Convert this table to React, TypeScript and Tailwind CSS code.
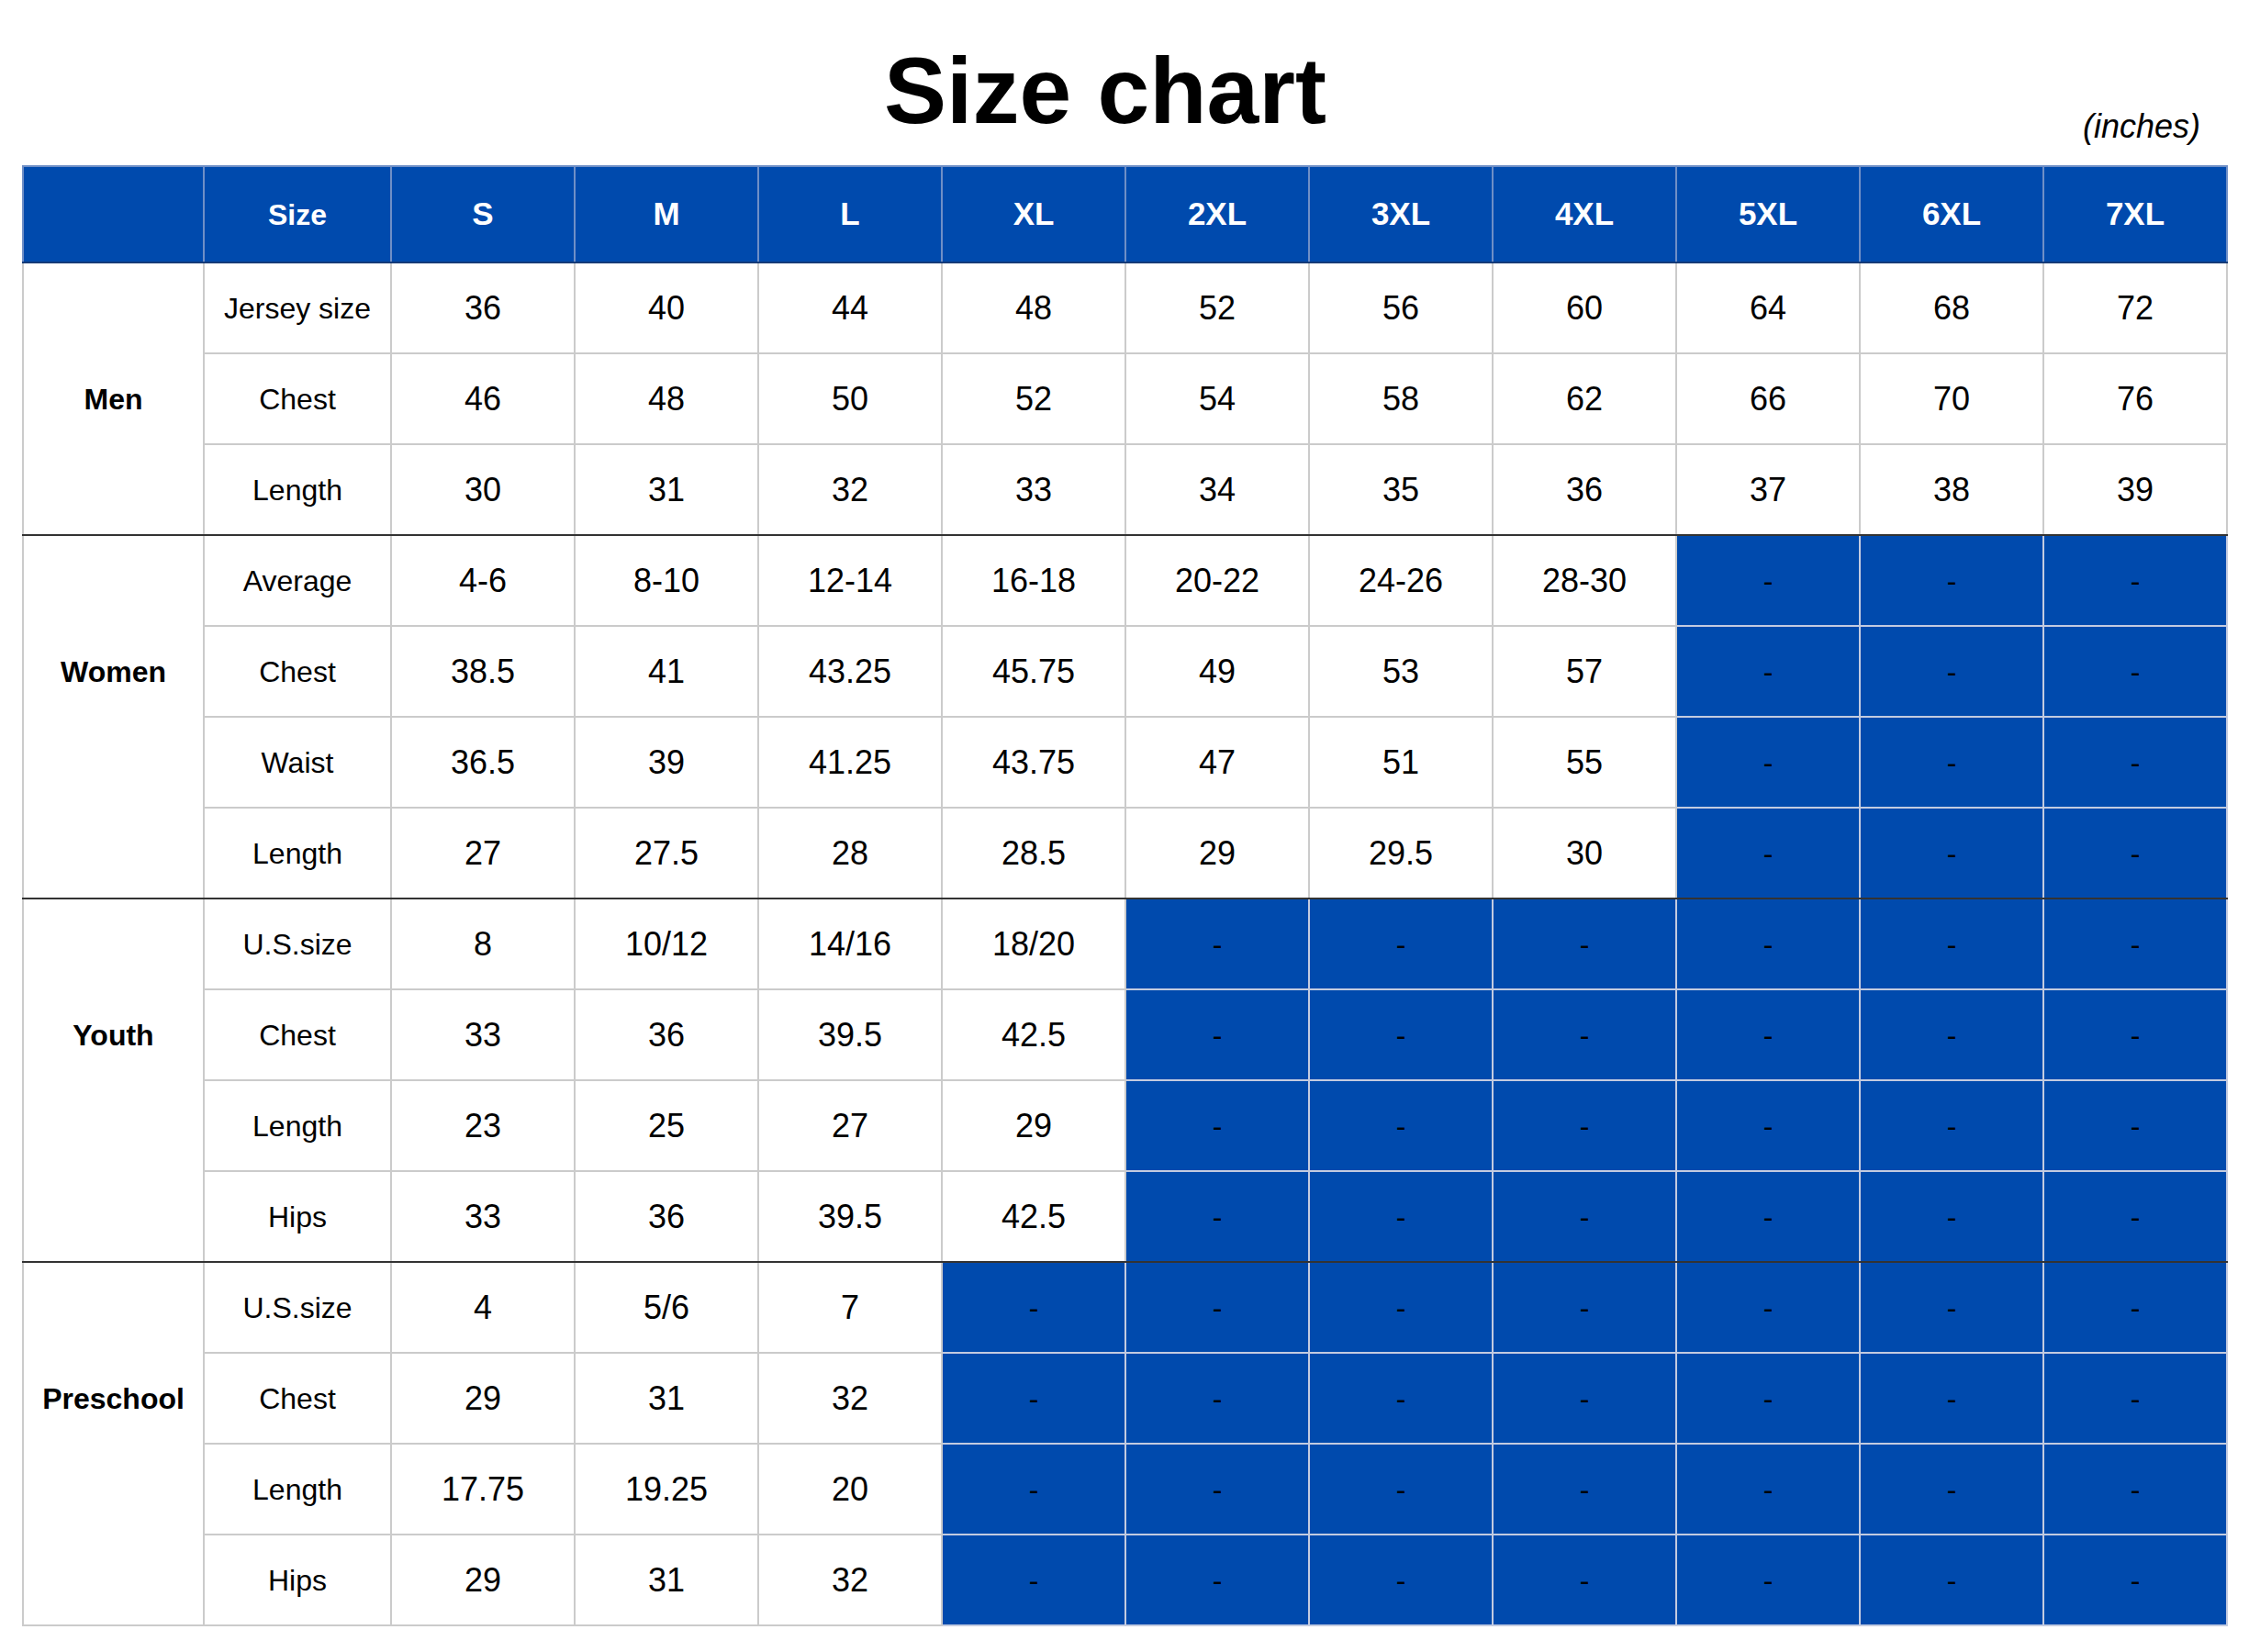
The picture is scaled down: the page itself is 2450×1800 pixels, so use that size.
const sizes = ['S', 'M', 'L', 'XL', '2XL', '3XL', '4XL', '5XL', '6XL', '7XL'];

type Group = { name: string; rows: { label: string; values: string[] }[] };

const groups: Group[] = [
  {
    name: 'Men',
    rows: [
      { label: 'Jersey size', values: ['36', '40', '44', '48', '52', '56', '60', '64', '68', '72'] },
      { label: 'Chest', values: ['46', '48', '50', '52', '54', '58', '62', '66', '70', '76'] },
      { label: 'Length', values: ['30', '31', '32', '33', '34', '35', '36', '37', '38', '39'] },
    ],
  },
  {
    name: 'Women',
    rows: [
      { label: 'Average', values: ['4-6', '8-10', '12-14', '16-18', '20-22', '24-26', '28-30'] },
      { label: 'Chest', values: ['38.5', '41', '43.25', '45.75', '49', '53', '57'] },
      { label: 'Waist', values: ['36.5', '39', '41.25', '43.75', '47', '51', '55'] },
      { label: 'Length', values: ['27', '27.5', '28', '28.5', '29', '29.5', '30'] },
    ],
  },
  {
    name: 'Youth',
    rows: [
      { label: 'U.S.size', values: ['8', '10/12', '14/16', '18/20'] },
      { label: 'Chest', values: ['33', '36', '39.5', '42.5'] },
      { label: 'Length', values: ['23', '25', '27', '29'] },
      { label: 'Hips', values: ['33', '36', '39.5', '42.5'] },
    ],
  },
  {
    name: 'Preschool',
    rows: [
      { label: 'U.S.size', values: ['4', '5/6', '7'] },
      { label: 'Chest', values: ['29', '31', '32'] },
      { label: 'Length', values: ['17.75', '19.25', '20'] },
      { label: 'Hips', values: ['29', '31', '32'] },
    ],
  },
];

export default function App() {
  return (
    <div className="w-[2450px] min-h-[1800px] bg-white text-black font-['Liberation_Sans',Arial,sans-serif]">
      {/* title */}
      <div className="h-[180px] pl-[24px] pr-[25px] grid grid-cols-[1fr_auto_1fr]">
        <div />
        <h1 className="pt-[48px] pr-[41px] text-[102px] leading-none font-bold">Size chart</h1>
        <div className="justify-self-end pt-[120px] pr-[28px] text-[36px] leading-none italic">(inches)</div>
      </div>

      <table className="ml-[24px] w-[2401px] table-fixed border-collapse text-center">
        <colgroup>
          <col className="w-[197px]" />
          <col className="w-[204px]" />
          {sizes.map((s) => (
            <col key={s} className="w-[200px]" />
          ))}
        </colgroup>
        <thead>
          <tr className="h-[105px] bg-[#004aad] text-white font-bold">
            <th className="border-2 border-[#6f8fc6] border-b-[#163b78]" />
            <th className="border-2 border-[#6f8fc6] border-b-[#163b78] text-[32px]">Size</th>
            {sizes.map((s) => (
              <th key={s} className="border-2 border-[#6f8fc6] border-b-[#163b78] text-[35px]">
                {s}
              </th>
            ))}
          </tr>
        </thead>
        <tbody>
          {groups.map((g, gi) =>
            g.rows.map((r, i) => {
              // dark rule between groups, plain grey under the last one
              const sep = i === g.rows.length - 1 && gi < groups.length - 1;
              const edge = sep ? 'border-b-[#333333]' : '';
              return (
                <tr key={g.name + r.label} className="h-[99px]">
                  {i === 0 && (
                    // label sits level with the group's second row
                    <td
                      rowSpan={g.rows.length}
                      className={`align-top pt-[124px] border-2 border-[#cbcbcb] ${
                        gi < groups.length - 1 ? 'border-b-[#333333]' : ''
                      } text-[32px] font-bold`}
                    >
                      {g.name}
                    </td>
                  )}
                  <td className={`border-2 border-[#cbcbcb] ${edge} text-[32px]`}>{r.label}</td>
                  {sizes.map((s, k) =>
                    k < r.values.length ? (
                      <td key={s} className={`border-2 border-[#cbcbcb] ${edge} text-[36px]`}>
                        {r.values[k]}
                      </td>
                    ) : (
                      <td key={s} className={`border-2 border-[#c3cbe0] ${edge} bg-[#004aad] text-[32px]`}>
                        -
                      </td>
                    )
                  )}
                </tr>
              );
            })
          )}
        </tbody>
      </table>
    </div>
  );
}
